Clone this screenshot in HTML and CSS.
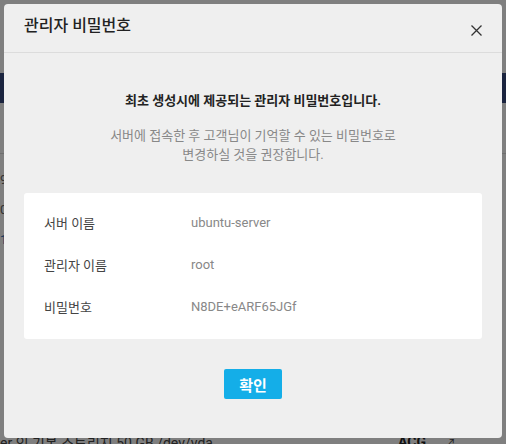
FILE: index.html
```html
<!DOCTYPE html>
<html lang="ko">
<head>
<meta charset="utf-8">
<title>관리자 비밀번호</title>
<link rel="stylesheet" href="styles.css">
</head>
<body>
<div class="page">
  <div class="topbar"></div>
  <div class="nav"></div>
  <div class="sub"></div>
  <div class="list">
    <div class="list-row"><span class="cell">9</span></div>
    <div class="list-row"><span class="cell">0</span></div>
    <div class="list-row"><span class="cell link">1</span></div>
  </div>
  <div class="spacer"></div>
  <div class="foot-row">
    <span class="foot-text">er 인 기본 스토리지 50 GB /dev/vda</span>
    <span class="foot-acg">ACG</span>
    <span class="foot-icon">↗</span>
  </div>
</div>
<div class="overlay">
  <div class="modal">
    <div class="modal-header">
      <h1 class="modal-title">관리자 비밀번호</h1>
      <button class="close" aria-label="닫기">
        <svg width="11" height="11" viewBox="0 0 11 11"><path d="M0.5 0.5 L10.5 10.5 M10.5 0.5 L0.5 10.5" stroke="#333" stroke-width="1.3" fill="none"/></svg>
      </button>
    </div>
    <div class="modal-body">
      <p class="lead">최초 생성시에 제공되는 관리자 비밀번호입니다.</p>
      <p class="desc">서버에 접속한 후 고객님이 기억할 수 있는 비밀번호로<br>변경하실 것을 권장합니다.</p>
      <div class="info">
        <div class="info-row"><span class="label">서버 이름</span><span class="value">ubuntu-server</span></div>
        <div class="info-row"><span class="label">관리자 이름</span><span class="value">root</span></div>
        <div class="info-row"><span class="label">비밀번호</span><span class="value">N8DE+eARF65JGf</span></div>
      </div>
      <div class="actions"><button class="ok">확인</button></div>
    </div>
  </div>
</div>
</body>
</html>
```
FILE: styles.css
```css
html, body {
  margin: 0;
  padding: 0;
}
body {
  width: 506px;
  height: 444px;
  overflow: hidden;
  font-family: Roboto, "Noto Sans CJK KR", sans-serif;
  background: #fff;
  position: relative;
}
.page {
  display: flex;
  flex-direction: column;
  height: 444px;
}
.topbar { height: 73px; background: #fff; }
.nav { height: 30px; background: #36487f; }
.sub { height: 50px; border-bottom: 1px solid #ddd; }
.list { display: flex; flex-direction: column; padding-top: 18px; }
.list-row { height: 30px; font-size: 13px; color: #666; }
.link { color: #2a6bb8; }
.spacer { flex: 1; }
.foot-row {
  display: flex;
  align-items: center;
  height: 20px;
  margin-bottom: -8px;
  font-size: 14px;
  color: #444;
}
.foot-text { width: 398px; }
.foot-acg { font-weight: bold; color: #222; }
.foot-icon { margin-left: 18px; color: #444; font-size: 12px; }

.overlay {
  position: absolute;
  inset: 0;
  background: rgba(0, 0, 0, 0.5);
}
.modal {
  position: absolute;
  left: 4px;
  top: 4px;
  width: 498px;
  height: 434px;
  background: #efefef;
  border-radius: 4px;
  display: flex;
  flex-direction: column;
}
.modal-header {
  height: 48px;
  border-bottom: 1px solid #dcdcdc;
  display: flex;
  align-items: center;
  justify-content: space-between;
  padding: 0 20px;
}
.modal-title {
  margin: 0;
  font-size: 16px;
  font-weight: 500;
  color: #222;
  line-height: 20px;
  margin-top: -4px;
}
.close {
  border: 0;
  background: none;
  padding: 0;
  width: 11px;
  height: 11px;
  margin-top: 4px;
  display: flex;
}
.modal-body {
  display: flex;
  flex-direction: column;
  align-items: center;
  padding: 0 20px;
}
.lead {
  margin: 38px 0 0;
  font-size: 13px;
  font-weight: bold;
  color: #222;
  line-height: 20px;
}
.desc {
  margin: 15px 0 0;
  font-size: 13px;
  color: #888;
  text-align: center;
  line-height: 19px;
}
.info {
  align-self: stretch;
  margin-top: 29px;
  background: #fff;
  border-radius: 3px;
  height: 146px;
  box-sizing: border-box;
  padding: 8px 20px 0;
  display: flex;
  flex-direction: column;
}
.info-row {
  display: flex;
  height: 42px;
  align-items: center;
  font-size: 13px;
}
.label { width: 147px; color: #444; }
.value { color: #888; }
.actions { margin-top: 30px; }
.ok {
  width: 58px;
  height: 30px;
  border: 0;
  border-radius: 2px;
  background: #14aee8;
  color: #fff;
  font-family: "Noto Sans CJK KR", sans-serif;
  font-size: 15px;
  font-weight: bold;
  padding: 0;
}
```
